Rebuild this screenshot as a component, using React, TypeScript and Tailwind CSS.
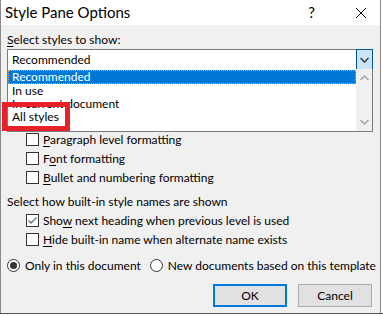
import React from "react";

const font = { fontFamily: 'Lato, "Liberation Sans", Arial, sans-serif' };

const CheckBox = ({ checked }: { checked?: boolean }) => (
  <span className="w-[13px] h-[13px] border border-[#333333] bg-white flex items-center justify-center shrink-0">
    {checked && (
      <svg width="11" height="11" viewBox="0 0 11 11">
        <path d="M1.5 5.5 L4 8 L9.5 2.5" stroke="#6d6d6d" strokeWidth="1.3" fill="none" />
      </svg>
    )}
  </span>
);

const CheckRow = ({ label, checked }: { label: [string, string, string]; checked?: boolean }) => (
  <div className="flex items-center gap-[4px] h-[19px] pl-[19px]">
    <CheckBox checked={checked} />
    <span className="whitespace-nowrap">
      {label[0]}
      <span className="underline underline-offset-2">{label[1]}</span>
      {label[2]}
    </span>
  </div>
);

const Radio = ({ on }: { on?: boolean }) => (
  <span className="w-[13px] h-[13px] rounded-full border border-[#333333] bg-white flex items-center justify-center shrink-0">
    {on && <span className="w-[7px] h-[7px] rounded-full bg-[#333333]" />}
  </span>
);

const Chevron = ({ up, color }: { up?: boolean; color: string }) => (
  <svg width="9" height="6" viewBox="0 0 9 6">
    <path d={up ? "M0.5 5 L4.5 1 L8.5 5" : "M0.5 1 L4.5 5 L8.5 1"} stroke={color} strokeWidth="1.4" fill="none" />
  </svg>
);

const App: React.FC = () => {
  return (
    <div className="relative w-[383px] h-[316px] bg-white overflow-hidden text-[12px] text-black" style={font}>
      <div className="w-[381px] h-[313px] border-l border-r border-[#8a8a8a] bg-[#f0f0f0] flex flex-col">
        {/* title bar */}
        <div className="h-[25px] bg-white flex items-center pl-[4px] shrink-0">
          <span className="text-[15px] leading-none flex-1">Style Pane Options</span>
          <span className="text-[15px] leading-none mr-[40px]">?</span>
          <svg width="12" height="12" viewBox="0 0 12 12" className="mr-[13px]">
            <path d="M1 1 L11 11 M11 1 L1 11" stroke="#000" strokeWidth="1" />
          </svg>
        </div>

        <div className="px-[6px] pt-[6px] flex flex-col">
          <div className="h-[18px] leading-[18px]">
            <span className="underline underline-offset-2">S</span>elect styles to show:
          </div>
          {/* combo */}
          <div className="h-[21px] w-[366px] bg-white border border-[#7a7a7a] flex items-center">
            <span className="flex-1 pl-[4px]">Recommended</span>
            <span className="w-[17px] h-[21px] -mr-px bg-[#cce4f7] border border-[#005499] flex items-center justify-center">
              <Chevron color="#333333" />
            </span>
          </div>

          <div className="mt-[60px]">
            <CheckRow label={["", "P", "aragraph level formatting"]} />
            <CheckRow label={["F", "o", "nt formatting"]} />
            <CheckRow label={["", "B", "ullet and numbering formatting"]} />
          </div>

          <div className="mt-[6px] h-[18px] leading-[18px]">Select how built-in style names are shown</div>
          <CheckRow label={["Sho", "w", " next heading when previous level is used"]} checked />
          <CheckRow label={["", "H", "ide built-in name when alternate name exists"]} />

          <div className="mt-[7px] flex items-center h-[19px] whitespace-nowrap">
            <div className="flex items-center gap-[5px]">
              <Radio on />
              <span>Only in this document</span>
            </div>
            <div className="flex items-center gap-[5px] ml-[9px]">
              <Radio />
              <span>New documents based on this template</span>
            </div>
          </div>

          <div className="mt-[9px] flex justify-end gap-[11px] pr-[2px]">
            <button className="w-[74px] h-[23px] bg-[#e1e1e1] border-2 border-[#0078d7] flex items-center justify-center">
              OK
            </button>
            <button className="w-[74px] h-[23px] bg-[#e1e1e1] border border-[#adadad] flex items-center justify-center">
              Cancel
            </button>
          </div>
        </div>
      </div>

      {/* open dropdown list */}
      <div className="absolute left-[7px] top-[69px] w-[366px] h-[63px] bg-white border border-[#7a7a7a] border-t-0 flex">
        <div className="flex-1 flex flex-col pt-px">
          <div className="h-[14px] bg-[#0078d7] text-white border border-dotted border-[#f7a34a] leading-[12px] pl-[3px]">Recommended</div>
          <div className="h-[13px] leading-[13px] pl-[4px]">In use</div>
          <div className="h-[13px] leading-[13px] pl-[4px]">In current document</div>
          <div className="h-[14px] leading-[14px] pl-[4px]">All styles</div>
        </div>
        <div className="w-[16px] bg-[#f0f0f0] flex flex-col items-center justify-between py-[6px]">
          <Chevron up color="#a3a3a3" />
          <Chevron color="#a3a3a3" />
        </div>
      </div>

      {/* red highlight */}
      <div className="absolute left-[2px] top-[102px] w-[68px] h-[29px] border-[5px] border-[#e8202a]" />

      {/* bottom strip outside window */}
      <div className="absolute left-0 bottom-0 w-[383px] h-[3px] border-t border-[#555555]" />
    </div>
  );
};

export default App;
